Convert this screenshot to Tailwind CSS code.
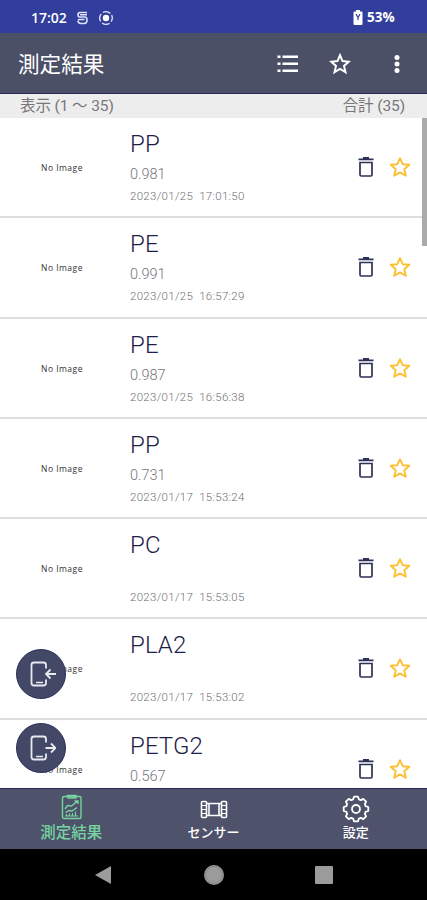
<!DOCTYPE html>
<html lang="ja">
<head>
<meta charset="utf-8">
<title>測定結果</title>
<script src="https://cdn.jsdelivr.net/npm/@tailwindcss/browser@4"></script>
</head>
<body class="w-[427px] h-[900px] overflow-hidden flex flex-col bg-white font-[Roboto,'Noto_Sans_CJK_JP',sans-serif]">
<div class="h-[33px] shrink-0 bg-[#313e9b] flex items-center pl-[31px] pr-[30px] pt-[2px] text-white">
  <span class="text-[14px] font-semibold w-[37px] leading-none font-['Open_Sans',sans-serif]">17:02</span>
  <svg class="ml-[8px]" width="13" height="14" viewBox="0 0 13 14" fill="none" stroke="#dfe3fa" stroke-width="1.6"><path d="M11 1.500H4Q2 1.500 2 4Q2 6 4 6H9Q11 6 11 9Q11 12.500 8 12.500H5Q2 12.500 2 9.500M4 3.800H11M2 8.500H8.500"/></svg>
  <svg class="ml-[9px]" width="16" height="16" viewBox="0 0 16 16" fill="none" stroke="#e6e9fb"><circle cx="8" cy="8" r="6.300" stroke-width="1.300" stroke-dasharray="7.900 2" stroke-dashoffset="4"/><circle cx="8" cy="8" r="3.200" fill="#fff" stroke="none"/></svg>
  <svg class="ml-auto" width="10" height="15" viewBox="0 0 10 15"><path d="M3 0h4v1.500h1.500q1 0 1 1V14q0 1-1 1h-7q-1 0-1-1V2.500q0-1 1-1H3z" fill="#fff"/><path d="M3 4l2 3.500L7 4M5 7v3" fill="none" stroke="#313e9b" stroke-width="1.200"/></svg>
  <span class="ml-[4px] w-[30px] text-[13.5px] font-bold leading-none font-['Open_Sans',sans-serif]">53%</span>
</div>
<header class="h-[61px] shrink-0 bg-[#4c5067] border-b border-[#292c59] flex items-center pl-[18px] pr-[27px] pt-[2px] text-white">
  <h1 class="text-[21.6px] leading-none font-normal pt-[2px]">測定結果</h1>
  <svg class="ml-auto" width="22" height="20" viewBox="0 0 22 20" fill="#fff"><path d="M.5 1.500h3v2.600h-3zM.5 8.500h3v2.600h-3zM.5 15.500h3v2.600h-3zM5.500 1.500h15.500v2.600H5.500zM5.500 8.500h15.500v2.600H5.500zM5.500 15.500h15.500v2.600H5.500z"/></svg>
  <svg class="ml-[30px]" width="22" height="22" viewBox="0 0 22 22" fill="none" stroke="#fff" stroke-width="2"><path d="M11 2.200l2.500 5.900 6.300.6-4.800 4.200 1.500 6.200-5.500-3.300-5.500 3.300L7 12.900 2.200 8.700l6.300-.6z"/></svg>
  <svg class="ml-[43px]" width="6" height="20" viewBox="0 0 6 20" fill="#fff"><circle cx="3" cy="3.500" r="2.500"/><circle cx="3" cy="10" r="2.500"/><circle cx="3" cy="16.500" r="2.500"/></svg>
</header>
<div class="h-[24px] shrink-0 bg-[#ededee] flex justify-between items-center pl-[20px] pr-[22px] pt-[1px] text-[#77777a] text-[15.5px] leading-none tracking-[-0.1px]">
  <span>表示 (1 ～ 35)</span><span>合計 (35)</span>
</div>
<main class="relative h-[670px] shrink-0 overflow-hidden bg-white">
  <div id="rows"></div>
  <div class="absolute right-0 top-0 w-[5px] h-[128px] bg-[#aaaaaa]"></div>
  <button class="absolute left-[15.500px] top-[530.500px] size-[50px] rounded-full bg-[#424866] border border-[#2c315a] flex items-center justify-center">
    <svg width="30" height="30" viewBox="0 0 30 30" fill="none" stroke="#e8eaf0" stroke-width="1.800"><path d="M20 9.500V6Q20 3.500 17.500 3.500H8Q5.500 3.500 5.500 6V24Q5.500 26.500 8 26.500H17.500Q20 26.500 20 24V20.500"/><path d="M10 23.500h7" stroke-width="1.500"/><path d="M30 15H20.500M24.500 10.500L20 15l4.500 4.500"/></svg>
  </button>
  <button class="absolute left-[15.500px] top-[604.500px] size-[50px] rounded-full bg-[#424866] border border-[#2c315a] flex items-center justify-center">
    <svg width="30" height="30" viewBox="0 0 30 30" fill="none" stroke="#e8eaf0" stroke-width="1.800"><path d="M20 9.500V6Q20 3.500 17.500 3.500H8Q5.500 3.500 5.500 6V24Q5.500 26.500 8 26.500H17.500Q20 26.500 20 24V20.500"/><path d="M10 23.500h7" stroke-width="1.500"/><path d="M19.500 15H29M25 10.500L29.500 15l-4.500 4.500"/></svg>
  </button>
</main>
<nav class="h-[61px] shrink-0 bg-[#4e526b] border-t border-[#292c5c] grid grid-cols-3 text-white font-medium leading-none">
  <div class="flex flex-col items-center text-[#75d5a0]">
    <svg class="mt-[5px] ml-[2px]" width="22" height="26" viewBox="0 0 22 26" fill="none" stroke="currentColor" stroke-width="1.400"><rect x="1.500" y="2.500" width="18.500" height="22" rx="1.500"/><path d="M6.500 3.500V1.500h8.500v2.500H6.500M4 15l2.500-3.500 4 .5L16.500 7M13.500 7H17v3M4.500 18.500l3.500-2 3 .5 5-3.500" /><path d="M5.500 22v-2M8.500 22v-2.500M11.500 22v-3M14.500 22v-4.500M4 22h13" stroke-width="1.200"/></svg>
    <span class="mt-[6px] text-[15.500px]">測定結果</span>
  </div>
  <div class="flex flex-col items-center">
    <svg class="mt-[11px] ml-[1px]" width="28" height="20" viewBox="0 0 28 20" fill="none" stroke="#fff" stroke-width="1.600"><rect x="1.500" y="1.500" width="5" height="16" rx="1"/><rect x="21.500" y="1.500" width="5" height="16" rx="1"/><path d="M2 5.500h4M2 9.500h4M2 13.500h4M22 5.500h4M22 9.500h4M22 13.500h4" stroke-width="1"/><path d="M6.500 3.500h15M6.500 15.500h15M9 4v2.500M9 15v-2.500M19 4v2.500M19 15v-2.500M9 6v7M19 6v7"/></svg>
    <span class="mt-[6px] text-[13px]">センサー</span>
  </div>
  <div class="flex flex-col items-center">
    <svg class="mt-[6px] ml-[1px]" width="28" height="28" viewBox="-14 -14 28 28" fill="none" stroke="#fff" stroke-width="1.800" stroke-linejoin="round"><path d="M-2.900-9.600L-2-12.300H2L2.900-9.600L4.740-8.840L7.280-10.110L10.110-7.280L8.840-4.740L9.600-2.900L12.300-2V2L9.600 2.900L8.840 4.740L10.110 7.280L7.280 10.110L4.740 8.840L2.900 9.600L2 12.300H-2L-2.900 9.600L-4.740 8.840L-7.280 10.110L-10.110 7.280L-8.840 4.740L-9.600 2.900L-12.300 2V-2L-9.600-2.900L-8.840-4.740L-10.110-7.280L-7.280-10.110L-4.740-8.840Z"/><circle r="4"/></svg>
    <span class="mt-[3px] text-[13px]">設定</span>
  </div>
</nav>
<div class="flex-1 bg-black flex items-center pl-[94px]">
  <svg width="18" height="20" viewBox="0 0 18 20"><path d="M1 10L17 1v18z" fill="#9b9b9b"/></svg>
  <svg class="ml-[91px]" width="22" height="22" viewBox="0 0 22 22"><circle cx="11" cy="11" r="10" fill="#9b9b9b"/><circle cx="11" cy="11" r="8.500" fill="none" stroke="#777" stroke-width=".6"/></svg>
  <span class="ml-[90px] size-[18px] rounded-[1px] bg-[#9b9b9b]"></span>
</div>
<script>
const items = [
  ["PP","0.981","2023/01/25","17:01:50"],
  ["PE","0.991","2023/01/25","16:57:29"],
  ["PE","0.987","2023/01/25","16:56:38"],
  ["PP","0.731","2023/01/17","15:53:24"],
  ["PC","","2023/01/17","15:53:05"],
  ["PLA2","","2023/01/17","15:53:02"],
  ["PETG2","0.567","",""]
];
document.getElementById("rows").innerHTML = items.map(([name, value, date, time]) => `
<article class="h-[100.25px] border-b-2 border-[#dedede] flex">
  <div class="w-[130px] pl-[41px] pt-[45px] text-[8.5px] leading-[10px] tracking-[0.48px] text-[#333] font-['Open_Sans',sans-serif]">No Image</div>
  <div class="flex-1 pt-[12px]">
    <h2 class="h-[28px] text-[24px] leading-[28px] font-light tracking-[0.1px] text-[#1d2048]">${name}</h2>
    <p class="h-[16px] mt-[9px] text-[14.5px] leading-[16px] font-light text-[#75757a]">${value}</p>
    <p class="mt-[6px] text-[11.5px] leading-[14px] font-light text-[#707075] flex gap-[6px] tracking-[0.3px]"><span>${date}</span><span>${time}</span></p>
  </div>
  <div class="flex pt-[38px] pr-[16px]">
    <svg width="18" height="24" viewBox="0 0 18 24" fill="none" stroke="#2e3157" stroke-width="1.800"><path d="M1.500 3.300h15M6 1.800h6"/><path d="M3 6.500h12v12.200q0 1.300-1.300 1.300H4.300Q3 20 3 18.700z" stroke-width="1.700"/></svg>
    <svg class="ml-[14px]" width="22" height="24" viewBox="0 0 22 24" fill="none" stroke="#fcc032" stroke-width="1.900" stroke-linejoin="round"><path d="M11 2.200l2.700 6 6.600.6-5 4.500 1.500 6.500-5.800-3.400-5.800 3.400 1.500-6.500-5-4.500 6.600-.6z"/></svg>
  </div>
</article>`).join("");
</script>
</body>
</html>
